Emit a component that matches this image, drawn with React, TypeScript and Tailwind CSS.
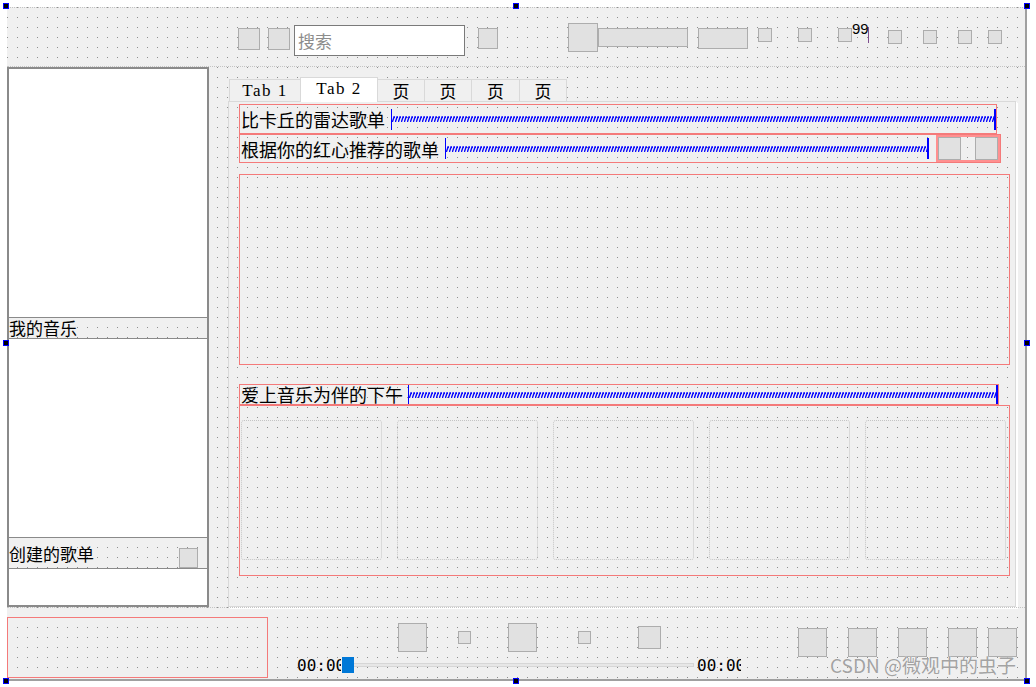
import React, { useId } from "react";

function Spacer({ className = "" }: { className?: string }) {
  const id = "zz" + useId().replace(/[^a-zA-Z0-9]/g, "");
  return (
    <div className={`flex-1 min-w-0 flex items-center border-l border-r-2 border-[#0000ff] ${className}`}>
      <svg className="block w-full h-[6px]">
        <defs>
          <pattern id={id} width="3" height="6" patternUnits="userSpaceOnUse">
            <path d="M0.4 6 L2.1 0.7 L3 1.8" stroke="#0000ff" strokeWidth="1.3" fill="none" />
          </pattern>
        </defs>
        <rect x="0" y="0" width="100%" height="6" fill={`url(#${id})`} />
      </svg>
    </div>
  );
}

function Btn({ className = "" }: { className?: string }) {
  return <div className={`shrink-0 bg-[#e1e1e1] border border-[#adadad] ${className}`} />;
}

function Handle({ className = "" }: { className?: string }) {
  return <div className={`absolute w-[6px] h-[6px] bg-black border border-[#0000ff] ${className}`} />;
}

export default function App() {
  return (
    <div className="relative w-[1036px] h-[687px] overflow-hidden bg-white pt-[7px] pl-[7px] font-['Noto_Sans_CJK_SC',sans-serif] text-black">
      <div className="w-[1020px] h-[674px] flex flex-col bg-[#f0f0f0] [background-image:radial-gradient(circle_at_5.5px_5.5px,#8f8f8f_0.6px,transparent_1px)] [background-size:10px_10px] [background-position:5px_4px] border-t border-t-[#c4c4c4] [border-top-style:dotted] border-r-2 border-r-[#a0a0a0] border-b-2 border-b-[#a0a0a0]">
        {/* top bar */}
        <div className="h-[59px] shrink-0 flex items-start border-b border-b-[#c4c4c4] [border-bottom-style:dotted]">
          <Btn className="ml-[231px] mt-[20px] w-[22px] h-[22px]" />
          <Btn className="ml-[8px] mt-[20px] w-[22px] h-[22px]" />
          <div className="shrink-0 ml-[4px] mt-[17px] w-[171px] h-[31px] bg-white border border-[#7a7a7a] flex items-center pl-[3px] text-[17px] leading-[20px] text-[#8d8d8d]">
            搜索
          </div>
          <Btn className="ml-[13px] mt-[20px] w-[20px] h-[21px]" />
          <Btn className="ml-[70px] mt-[15px] w-[30px] h-[29px]" />
          <Btn className="mt-[20px] w-[90px] h-[19px]" />
          <Btn className="ml-[10px] mt-[20px] w-[50px] h-[21px]" />
          <Btn className="ml-[10px] mt-[20px] w-[14px] h-[14px]" />
          <Btn className="ml-[26px] mt-[20px] w-[14px] h-[14px]" />
          <Btn className="ml-[26px] mt-[20px] w-[14px] h-[14px]" />
          <div className="shrink-0 w-[16px] mt-[12px] font-['Liberation_Sans',sans-serif] text-[15px] leading-[18px]">99</div>
          <div className="shrink-0 w-px h-[16px] mt-[19px] bg-[#7e4e8e]" />
          <Btn className="ml-[19px] mt-[22px] w-[14px] h-[14px]" />
          <Btn className="ml-[21px] mt-[22px] w-[14px] h-[14px]" />
          <Btn className="ml-[21px] mt-[22px] w-[14px] h-[14px]" />
          <Btn className="ml-[16px] mt-[22px] w-[14px] h-[14px]" />
        </div>

        {/* middle */}
        <div className="h-[540px] shrink-0 flex items-start">
          {/* left panel */}
          <div className="w-[202px] h-[540px] shrink-0 flex flex-col border-2 border-[#8a8a8a]">
            <div className="h-[248px] shrink-0 bg-white" />
            <div className="h-[22px] shrink-0 border-y border-[#8a8a8a] flex items-center text-[17px] leading-[20px]">我的音乐</div>
            <div className="h-[198px] shrink-0 bg-white" />
            <div className="h-[32px] shrink-0 border-y border-[#8a8a8a] flex justify-between">
              <span className="self-center text-[17px] leading-[20px] mt-[1px]">创建的歌单</span>
              <Btn className="self-end w-[19px] h-[20px] mr-[9px]" />
            </div>
            <div className="flex-1 bg-white" />
          </div>

          {/* tab widget */}
          <div className="ml-[19px] mt-[10px] w-[788px] flex flex-col">
            <div className="h-[24px] flex items-end pl-px">
              <div className="w-[71px] h-[22px] border-t border-l border-[#d9d9d9] bg-[#f0f0f0] flex items-center justify-center font-['Liberation_Serif',serif] text-[17px] tracking-[1.5px] leading-[20px]">Tab 1</div>
              <div className="relative z-10 -mb-px w-[78px] h-[25px] border-x border-t border-[#d9d9d9] bg-white flex items-center justify-center font-['Liberation_Serif',serif] text-[17px] tracking-[1.5px] leading-[20px] pb-[2px]">Tab 2</div>
              <div className="w-[47px] h-[22px] border-t border-r border-[#d9d9d9] bg-[#f0f0f0] flex items-center justify-center text-[17px] leading-[20px]">页</div>
              <div className="w-[47px] h-[22px] border-t border-r border-[#d9d9d9] bg-[#f0f0f0] flex items-center justify-center text-[17px] leading-[20px]">页</div>
              <div className="w-[48px] h-[22px] border-t border-r border-[#d9d9d9] bg-[#f0f0f0] flex items-center justify-center text-[17px] leading-[20px]">页</div>
              <div className="w-[47px] h-[22px] border-t border-r border-[#d9d9d9] bg-[#f0f0f0] flex items-center justify-center text-[17px] leading-[20px]">页</div>
            </div>
            <div className="h-[506px] border border-[#d9d9d9] shadow-[1px_1px_0_0_#ffffff,2px_2px_0_0_#ffffff] pl-[10px] pt-[2px] flex flex-col">
              <div className="w-[758px] h-[30px] shrink-0 border border-[#f47a7a] flex items-center">
                <span className="shrink-0 pl-px pr-[6px] text-[18px] leading-[20px]">比卡丘的雷达歌单</span>
                <Spacer className="h-[21px]" />
              </div>
              <div className="w-[762px] h-[29px] shrink-0 border border-[#f47a7a] flex items-center">
                <span className="shrink-0 pl-px pr-[6px] text-[18px] leading-[20px]">根据你的红心推荐的歌单</span>
                <Spacer className="h-[21px]" />
                <div className="shrink-0 ml-[7px] w-[64px] self-stretch border-2 border-[#ff9090] flex items-center gap-[14px]">
                  <Btn className="w-[23px] h-[23px]" />
                  <Btn className="w-[23px] h-[23px]" />
                </div>
              </div>
              <div className="mt-[11px] w-[771px] h-[191px] shrink-0 border border-[#f47a7a]" />
              <div className="mt-[19px] w-[760px] h-[21px] shrink-0 border border-[#f47a7a] flex items-center">
                <span className="shrink-0 pl-px pr-[5px] text-[18px] leading-[19px]">爱上音乐为伴的下午</span>
                <Spacer className="self-stretch" />
              </div>
              <div className="w-[771px] h-[171px] shrink-0 border border-[#f47a7a] pl-px pt-[14px] flex items-start gap-[15px]">
                <div className="w-[141px] h-[140px] shrink-0 border border-dotted border-[#c4c4c4] rounded-[3px]" />
                <div className="w-[141px] h-[140px] shrink-0 border border-dotted border-[#c4c4c4] rounded-[3px]" />
                <div className="w-[141px] h-[140px] shrink-0 border border-dotted border-[#c4c4c4] rounded-[3px]" />
                <div className="w-[141px] h-[140px] shrink-0 border border-dotted border-[#c4c4c4] rounded-[3px]" />
                <div className="w-[141px] h-[140px] shrink-0 border border-dotted border-[#c4c4c4] rounded-[3px]" />
              </div>
            </div>
          </div>
        </div>

        {/* bottom bar */}
        <div className="h-[72px] shrink-0 flex items-start border-t border-t-[#c4c4c4] [border-top-style:dotted]">
          <div className="shrink-0 mt-[9px] w-[261px] h-[61px] border border-[#f47a7a]" />
          <div className="shrink-0 ml-[29px] mt-[15px] w-[444px] flex flex-col">
            <div className="h-[29px] flex items-center">
              <Btn className="ml-[101px] w-[29px] h-[29px]" />
              <Btn className="ml-[31px] w-[13px] h-[13px]" />
              <Btn className="ml-[37px] w-[29px] h-[29px]" />
              <Btn className="ml-[41px] w-[13px] h-[13px]" />
              <Btn className="ml-[47px] w-[23px] h-[23px]" />
            </div>
            <div className="mt-[5px] h-[16px] flex items-center">
              <div className="shrink-0 w-[44px] overflow-hidden whitespace-nowrap font-['DejaVu_Sans_Mono',monospace] text-[16px] leading-[16px] mt-[2px]">00:00</div>
              <div className="relative shrink-0 ml-px w-[352px] h-[16px]">
                <div className="absolute left-0 right-0 top-[6px] h-[4px] bg-[#e7e7e7] border border-[#d6d6d6]" />
                <div className="absolute left-0 top-0 w-[12px] h-[16px] bg-[#0078d7]" />
              </div>
              <div className="shrink-0 ml-[3px] w-[44px] overflow-hidden whitespace-nowrap font-['DejaVu_Sans_Mono',monospace] text-[16px] leading-[16px] mt-[2px]">00:00</div>
            </div>
          </div>
          <div className="shrink-0 ml-[57px] mt-[20px] flex">
            <Btn className="w-[29px] h-[29px]" />
            <Btn className="ml-[21px] w-[29px] h-[29px]" />
            <Btn className="ml-[21px] w-[29px] h-[29px]" />
            <Btn className="ml-[21px] w-[29px] h-[29px]" />
            <Btn className="ml-[11px] w-[29px] h-[29px]" />
          </div>
        </div>
      </div>

      <div className="absolute left-[830px] top-[652px] whitespace-nowrap text-[19px] leading-[26px] text-[#a3a3a3] [text-shadow:0_0_1px_#ffffff]">
        CSDN @微观中的虫子
      </div>

      <Handle className="left-[3px] top-[3px]" />
      <Handle className="left-[513px] top-[3px]" />
      <Handle className="left-[1024px] top-[3px]" />
      <Handle className="left-[3px] top-[340px]" />
      <Handle className="left-[1024px] top-[340px]" />
      <Handle className="left-[3px] top-[678px]" />
      <Handle className="left-[513px] top-[678px]" />
      <Handle className="left-[1024px] top-[678px]" />
    </div>
  );
}
